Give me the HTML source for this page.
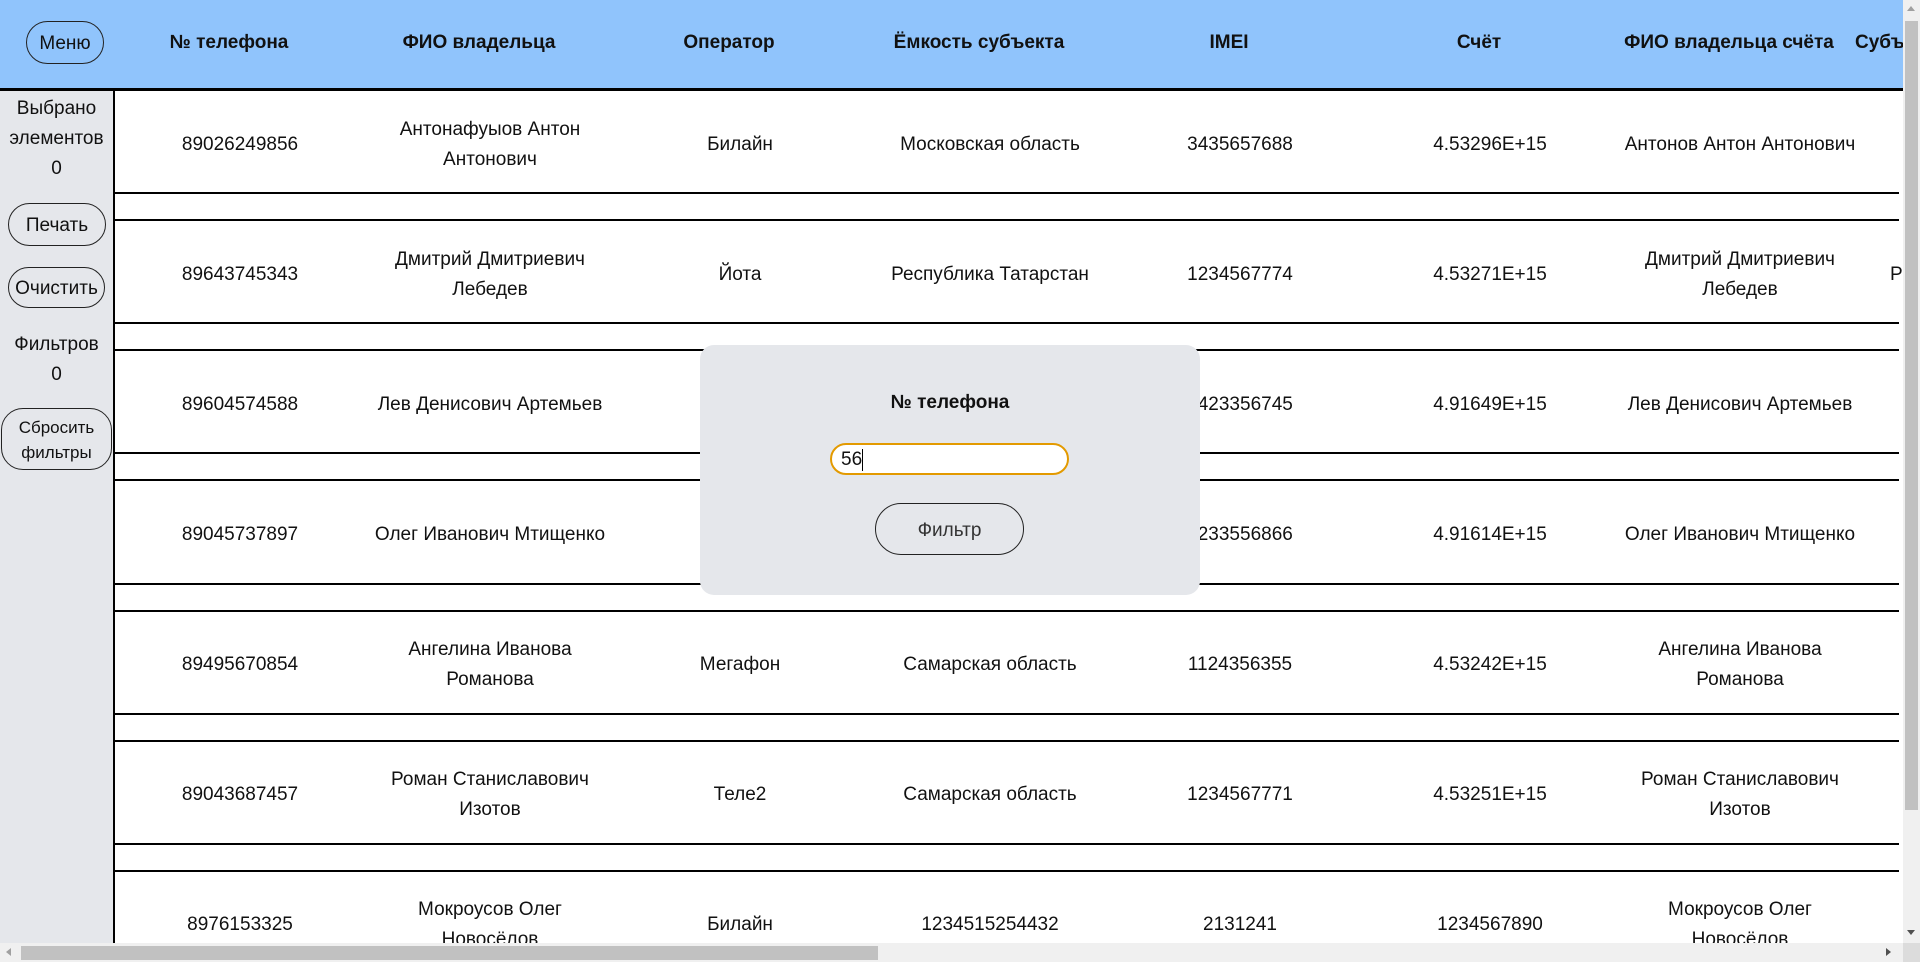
<!DOCTYPE html>
<html><head><meta charset="utf-8"><style>
*{box-sizing:border-box;margin:0;padding:0}
body{width:1920px;height:962px;overflow:hidden;background:#fff;font-family:"Liberation Sans","DejaVu Sans",sans-serif;color:#111;position:relative;font-size:19px}
.hdr{position:absolute;left:0;top:0;width:1903px;height:91px;background:#90c4fc;border-bottom:3px solid #000}
.h{position:absolute;top:32px;font-weight:bold;font-size:19px;transform:translateX(-50%);white-space:nowrap}
.side{position:absolute;left:0;top:91px;width:115px;height:852px;background:#e5e7eb;border-right:2px solid #000}
.st{position:absolute;left:0;width:113px;text-align:center;font-size:19px;line-height:30px}
.btn{position:absolute;border:1px solid #222;border-radius:22px;text-align:center;font-size:19px;background:transparent}
.line{position:absolute;left:115px;width:1784px;height:2px;background:#000}
.c{position:absolute;transform:translate(-50%,-50%);text-align:center;line-height:30px;white-space:nowrap;font-size:19px;margin-top:2px}
.modal{position:absolute;left:700px;top:345px;width:500px;height:250px;background:#e5e7eb;border-radius:14px}
.vs{position:absolute;right:0;top:0;width:17px;height:945px;background:#f0f0f0}
.hs{position:absolute;left:0;bottom:0;width:1920px;height:19px;background:#f0f0f0}
</style></head><body>
<div class="hdr">
<div class="btn" style="left:26px;top:21px;width:78px;height:43px;line-height:43px">Меню</div>
<div class="h" style="left:229px">№ телефона</div>
<div class="h" style="left:479px">ФИО владельца</div>
<div class="h" style="left:729px">Оператор</div>
<div class="h" style="left:979px">Ёмкость субъекта</div>
<div class="h" style="left:1229px">IMEI</div>
<div class="h" style="left:1479px">Счёт</div>
<div class="h" style="left:1729px">ФИО владельца счёта</div>
<div class="h" style="left:1855px;transform:none">Субъект</div>
</div>
<div class="vs"><div style="position:absolute;left:2px;top:21px;width:13px;height:789px;background:#c1c1c1"></div><div style="position:absolute;left:4px;top:6px;border:4px solid transparent;border-bottom:5px solid #a0a0a0;border-top:0"></div><div style="position:absolute;left:4px;top:930px;border:4px solid transparent;border-top:5px solid #505050;border-bottom:0"></div></div>
<div class="side">
<div class="st" style="top:3px">Выбрано<br>элементов<br>0</div>
<div class="btn" style="left:8px;top:112px;width:98px;height:43px;line-height:43px">Печать</div>
<div class="btn" style="left:8px;top:176px;width:97px;height:41px;line-height:41px">Очистить</div>
<div class="st" style="top:239px">Фильтров<br>0</div>
<div class="btn" style="left:1px;top:317px;width:111px;height:62px;font-size:17px;line-height:25px;padding-top:6px">Сбросить<br>фильтры</div>
</div>
<div class="line" style="top:192px"></div><div class="line" style="top:219px"></div>
<div class="line" style="top:322px"></div><div class="line" style="top:349px"></div>
<div class="line" style="top:452px"></div><div class="line" style="top:479px"></div>
<div class="line" style="top:583px"></div><div class="line" style="top:610px"></div>
<div class="line" style="top:713px"></div><div class="line" style="top:740px"></div>
<div class="line" style="top:843px"></div><div class="line" style="top:870px"></div>

<div class="c" style="left:240px;top:143px">89026249856</div>
<div class="c" style="left:490px;top:143px">Антонафуыов Антон<br>Антонович</div>
<div class="c" style="left:740px;top:143px">Билайн</div>
<div class="c" style="left:990px;top:143px">Московская область</div>
<div class="c" style="left:1240px;top:143px">3435657688</div>
<div class="c" style="left:1490px;top:143px">4.53296E+15</div>
<div class="c" style="left:1740px;top:143px">Антонов Антон Антонович</div>

<div class="c" style="left:240px;top:273px">89643745343</div>
<div class="c" style="left:490px;top:273px">Дмитрий Дмитриевич<br>Лебедев</div>
<div class="c" style="left:740px;top:273px">Йота</div>
<div class="c" style="left:990px;top:273px">Республика Татарстан</div>
<div class="c" style="left:1240px;top:273px">1234567774</div>
<div class="c" style="left:1490px;top:273px">4.53271E+15</div>
<div class="c" style="left:1740px;top:273px">Дмитрий Дмитриевич<br>Лебедев</div>
<div class="c" style="left:1890px;top:273px;transform:translateY(-50%)">Р</div>

<div class="c" style="left:240px;top:403px">89604574588</div>
<div class="c" style="left:490px;top:403px">Лев Денисович Артемьев</div>
<div class="c" style="left:1240px;top:403px">3423356745</div>
<div class="c" style="left:1490px;top:403px">4.91649E+15</div>
<div class="c" style="left:1740px;top:403px">Лев Денисович Артемьев</div>

<div class="c" style="left:240px;top:533px">89045737897</div>
<div class="c" style="left:490px;top:533px">Олег Иванович Мтищенко</div>
<div class="c" style="left:1240px;top:533px">1233556866</div>
<div class="c" style="left:1490px;top:533px">4.91614E+15</div>
<div class="c" style="left:1740px;top:533px">Олег Иванович Мтищенко</div>

<div class="c" style="left:240px;top:663px">89495670854</div>
<div class="c" style="left:490px;top:663px">Ангелина Иванова<br>Романова</div>
<div class="c" style="left:740px;top:663px">Мегафон</div>
<div class="c" style="left:990px;top:663px">Самарская область</div>
<div class="c" style="left:1240px;top:663px">1124356355</div>
<div class="c" style="left:1490px;top:663px">4.53242E+15</div>
<div class="c" style="left:1740px;top:663px">Ангелина Иванова<br>Романова</div>

<div class="c" style="left:240px;top:793px">89043687457</div>
<div class="c" style="left:490px;top:793px">Роман Станиславович<br>Изотов</div>
<div class="c" style="left:740px;top:793px">Теле2</div>
<div class="c" style="left:990px;top:793px">Самарская область</div>
<div class="c" style="left:1240px;top:793px">1234567771</div>
<div class="c" style="left:1490px;top:793px">4.53251E+15</div>
<div class="c" style="left:1740px;top:793px">Роман Станиславович<br>Изотов</div>

<div class="c" style="left:240px;top:923px">8976153325</div>
<div class="c" style="left:490px;top:923px">Мокроусов Олег<br>Новосёлов</div>
<div class="c" style="left:740px;top:923px">Билайн</div>
<div class="c" style="left:990px;top:923px">1234515254432</div>
<div class="c" style="left:1240px;top:923px">2131241</div>
<div class="c" style="left:1490px;top:923px">1234567890</div>
<div class="c" style="left:1740px;top:923px">Мокроусов Олег<br>Новосёлов</div>

<div class="modal">
<div style="position:absolute;left:0;width:500px;top:47px;text-align:center;font-weight:bold;font-size:19px">№ телефона</div>
<div style="position:absolute;left:130px;top:98px;width:239px;height:32px;background:#fff;border:2px solid #e39a00;border-radius:16px;font-size:19px;line-height:30px;padding-left:9px">56<span style="display:inline-block;width:1px;height:22px;background:#000;vertical-align:middle"></span></div>
<div class="btn" style="left:175px;top:158px;width:149px;height:52px;line-height:54px;border-radius:26px;color:#333">Фильтр</div>
</div>
<div class="hs"><div style="position:absolute;left:21px;top:3px;width:857px;height:14px;background:#c1c1c1"></div><div style="position:absolute;left:6px;top:5px;border:4px solid transparent;border-right:5px solid #a0a0a0;border-left:0"></div><div style="position:absolute;left:1886px;top:5px;border:4px solid transparent;border-left:5px solid #505050;border-right:0"></div><div style="position:absolute;right:0;top:0;width:17px;height:19px;background:#dcdcdc"></div></div>
</body></html>
